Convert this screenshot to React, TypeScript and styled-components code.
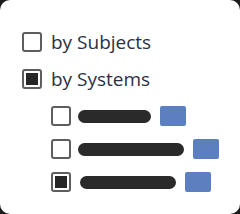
import styled, { createGlobalStyle } from "styled-components";

const Global = createGlobalStyle`
  html, body {
    margin: 0;
    padding: 0;
    background: #1c1c1c;
  }
`;

const Card = styled.div`
  box-sizing: border-box;
  width: 240px;
  height: 214px;
  background: #fff;
  border-radius: 10px;
  padding: 32px 0 0 22px;
  font-family: "Open Sans", "Noto Sans", sans-serif;
`;

const Option = styled.label`
  display: flex;
  align-items: center;
  gap: 9px;
  height: 20px;
  margin-bottom: 17px;
  font-size: 19px;
  font-weight: 500;
  color: #2b3046;
`;

const Box = styled.span<{ $checked?: boolean }>`
  box-sizing: border-box;
  width: 20px;
  height: 20px;
  flex: none;
  border: 2px solid #5e5e5e;
  border-radius: 3px;
  padding: 2px;
  display: flex;

  &::after {
    content: "";
    flex: 1;
    background: ${({ $checked }) => ($checked ? "#262626" : "transparent")};
  }
`;

const SubList = styled.div`
  display: flex;
  flex-direction: column;
  gap: 13px;
  margin: 1px 0 0 29px;
`;

const SubRow = styled.div`
  display: flex;
  align-items: center;
  height: 20px;
`;

const Bar = styled.span<{ $width: number; $gap: number }>`
  width: ${({ $width }) => $width}px;
  height: 13px;
  margin: 0 9px 0 ${({ $gap }) => $gap}px;
  background: #2a2a2a;
  border-radius: 7px;
`;

const Swatch = styled.span`
  width: 26px;
  height: 20px;
  background: #5b7fbf;
  border-radius: 2px;
`;

const rows = [
  { width: 73, gap: 7, checked: false },
  { width: 106, gap: 7, checked: false },
  { width: 96, gap: 9, checked: true },
];

export default function App() {
  return (
    <>
      <Global />
      <Card>
        <Option>
          <Box />
          by Subjects
        </Option>
        <Option>
          <Box $checked />
          by Systems
        </Option>
        <SubList>
          {rows.map((r, i) => (
            <SubRow key={i}>
              <Box $checked={r.checked} />
              <Bar $width={r.width} $gap={r.gap} />
              <Swatch />
            </SubRow>
          ))}
        </SubList>
      </Card>
    </>
  );
}
